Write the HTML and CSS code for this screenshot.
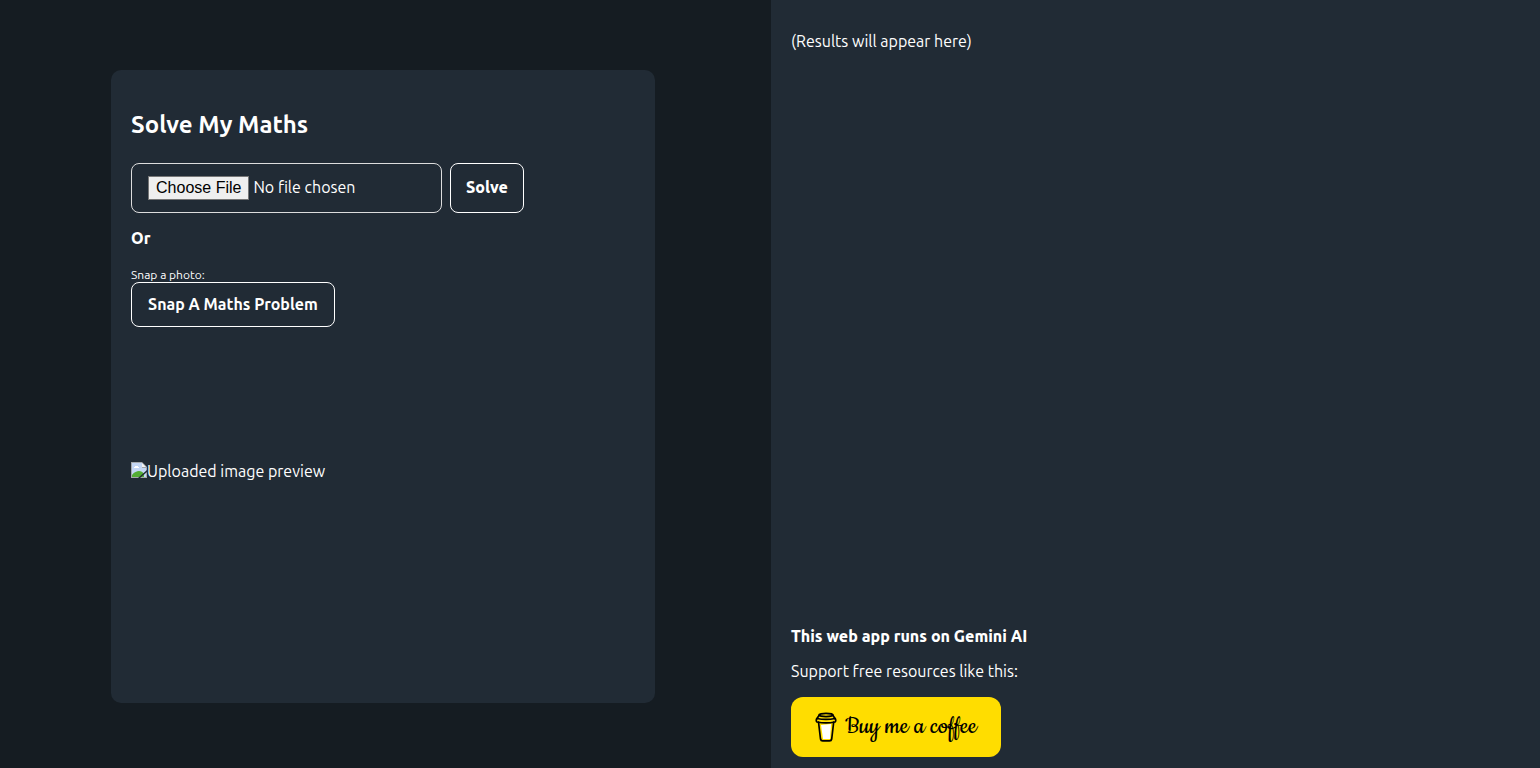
FILE: index.html
```html
<!DOCTYPE html>
<html lang="en">
<head>
  <meta charset="UTF-8">
  <meta name="viewport" content="width=device-width, initial-scale=1.0">
  <title>Solve My Maths</title>
  <link rel="stylesheet" href="styles.css">
</head>
<body>
  <div class="container">
    <!-- Upload side -->
    <main class="left">
      <div class="card">
        <h2>Solve My Maths</h2>
        <form class="upload-form">
          <input type="file" id="imageInput" class="file-input" accept="image/*" aria-label="Choose an image">
          <button type="submit" class="btn">Solve</button>
        </form>
        <p class="or">Or</p>
        <label for="snapBtn" class="snap-label">Snap a photo:</label>
        <button type="button" id="snapBtn" class="btn">Snap A Maths Problem</button>
        <div class="preview">
          <svg width="16" height="16" viewBox="0 0 16 16" aria-hidden="true">
            <path d="M0 0h11l5 5v11H0z" fill="#a5a9ad"/>
            <path d="M1 1h10v5h4v9H1z" fill="#c4d7f5"/>
            <path d="M11 1v4h4z" fill="#f4f4f4"/>
            <path d="M3 6V5h1V4h3v1h1v1z" fill="#fff"/>
            <path d="M1 15v-2c2-3 5-4 7-4s4 1 5 3v3z" fill="#53ad34"/>
            <path d="M16 8v2l-7 6H7z" fill="#212b35"/>
          </svg>
          <span>Uploaded image preview</span>
        </div>
      </div>
    </main>

    <!-- Results side -->
    <section class="right">
      <p class="results">(Results will appear here)</p>
      <footer class="footer">
        <p class="powered">This web app runs on Gemini AI</p>
        <p>Support free resources like this:</p>
        <a href="#" class="coffee">
          <svg width="22" height="30" viewBox="0 0 22 30" aria-hidden="true">
            <path d="M6 13l10-1-1 15H8z" fill="#fff"/>
            <g fill="none" stroke="#000" stroke-width="1.7" stroke-linecap="round" stroke-linejoin="round">
              <path d="M3.500 10l2 17c.2 1.200 1 1.800 2.200 1.800h6.800c1.200 0 2-.6 2.200-1.800l2-17"/>
              <path d="M2 6.500c5 1 13 1 18 0 1 .8 1 2.800 0 3.500-5 1-13 1-18 0-1-.7-1-2.700 0-3.500z"/>
              <path d="M2 6.500l2-3M20 6.500l-2-3"/>
              <ellipse cx="11" cy="3" rx="7" ry="1.600"/>
            </g>
          </svg>
          <span>Buy me a coffee</span>
        </a>
      </footer>
    </section>
  </div>
</body>
</html>
```
FILE: styles.css
```css
* {
  box-sizing: border-box;
}
body {
  margin: 0;
  font-family: Ubuntu, "Noto Sans", sans-serif;
  font-size: 16px;
  line-height: 18px;
  color: #fff;
  background: #151c22;
}
.container {
  display: grid;
  grid-template-columns: 1fr 1fr;
  gap: 2px;
  min-height: 100vh;
}
/* Upload side */
.left {
  display: flex;
  justify-content: center;
  padding: 70px 3px 65px 0;
}
.card {
  width: 71%;
  padding: 20px;
  background: #212b35;
  border-radius: 10px;
}
h2 {
  margin: 20px 0 24px;
  font-size: 24px;
  font-weight: 600;
  line-height: 29px;
}
.upload-form {
  display: flex;
  gap: 8px;
}
.file-input {
  width: 311px;
  height: 50px;
  padding: 11px 16px;
  font: inherit;
  line-height: 24px;
  color: #fff;
  border: 1px solid #ddd;
  border-radius: 8px;
}
.file-input::file-selector-button {
  margin-right: 4px;
  padding: 2px 7px;
  font: 16px "Liberation Sans", Arial, sans-serif;
  color: #000;
  background: #efefef;
  border: 1px solid #767676;
}
.btn {
  padding: 12px 16px;
  font: inherit;
  font-weight: 600;
  line-height: 19px;
  color: #fff;
  background: none;
  border: 1px solid #fff;
  border-radius: 8px;
  cursor: pointer;
}
.upload-form .btn {
  padding: 12px 15px 14px;
  font-weight: 800;
}
.or {
  margin: 16px 0 20px;
  font-weight: 800;
}
.snap-label {
  display: block;
  font-size: 12px;
  line-height: 15px;
}
.preview {
  display: flex;
  margin-top: 135px;
}
/* Results side */
.right {
  display: flex;
  flex-direction: column;
  padding: 16px 20px 11px;
  background: #212b35;
}
.results {
  margin: 16px 0;
}
.footer {
  margin-top: auto;
}
.footer p {
  margin: 0 0 17px;
}
.footer .powered {
  font-weight: 800;
}
.coffee {
  display: flex;
  align-items: center;
  justify-content: center;
  gap: 8px;
  width: 210px;
  height: 60px;
  font-family: Cookie, cursive;
  font-size: 28px;
  color: #000;
  text-decoration: none;
  background: #fd0;
  border-radius: 12px;
}
```
